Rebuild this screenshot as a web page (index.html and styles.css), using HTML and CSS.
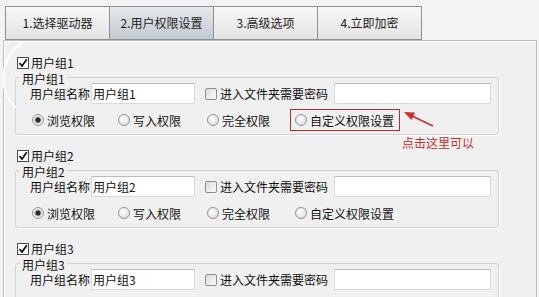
FILE: index.html
```html
<!DOCTYPE html>
<html lang="zh-CN">
<head>
  <meta charset="UTF-8">
  <title>用户权限设置</title>
  <link rel="stylesheet" href="styles.css">
</head>
<body>
  <div class="tabs">
    <div class="tab">1.选择驱动器</div>
    <div class="tab active">2.用户权限设置</div>
    <div class="tab">3.高级选项</div>
    <div class="tab last">4.立即加密</div>
  </div>

  <div class="panel">

    <div class="group">
      <label class="head"><span class="check on"><svg width="10" height="10" viewBox="0 0 10 10"><path d="M1.5 5 L4 8 L8.8 1.2" fill="none" stroke="#111" stroke-width="1.8"/></svg></span>用户组1</label>
      <fieldset class="box">
        <legend>用户组1</legend>
        <div class="row">
          <span class="name">用户组名称</span>
          <input class="field short" value="用户组1">
          <label class="opt"><span class="check"></span>进入文件夹需要密码</label>
          <input class="field long">
        </div>
        <div class="row radios">
          <label class="item w1"><span class="radio on"></span>浏览权限</label>
          <label class="item w2"><span class="radio"></span>写入权限</label>
          <label class="item w3"><span class="radio"></span>完全权限</label>
          <label class="item w4 marked"><span class="radio"></span>自定义权限设置</label>
        </div>
      </fieldset>
    </div>

    <div class="group">
      <label class="head"><span class="check on"><svg width="10" height="10" viewBox="0 0 10 10"><path d="M1.5 5 L4 8 L8.8 1.2" fill="none" stroke="#111" stroke-width="1.8"/></svg></span>用户组2</label>
      <fieldset class="box">
        <legend>用户组2</legend>
        <div class="row">
          <span class="name">用户组名称</span>
          <input class="field short" value="用户组2">
          <label class="opt"><span class="check"></span>进入文件夹需要密码</label>
          <input class="field long">
        </div>
        <div class="row radios">
          <label class="item w1"><span class="radio on"></span>浏览权限</label>
          <label class="item w2"><span class="radio"></span>写入权限</label>
          <label class="item w3"><span class="radio"></span>完全权限</label>
          <label class="item w4"><span class="radio"></span>自定义权限设置</label>
        </div>
      </fieldset>
    </div>

    <div class="group">
      <label class="head"><span class="check on"><svg width="10" height="10" viewBox="0 0 10 10"><path d="M1.5 5 L4 8 L8.8 1.2" fill="none" stroke="#111" stroke-width="1.8"/></svg></span>用户组3</label>
      <fieldset class="box">
        <legend>用户组3</legend>
        <div class="row">
          <span class="name">用户组名称</span>
          <input class="field short" value="用户组3">
          <label class="opt"><span class="check"></span>进入文件夹需要密码</label>
          <input class="field long">
        </div>
        <div class="row radios">
          <label class="item w1"><span class="radio on"></span>浏览权限</label>
          <label class="item w2"><span class="radio"></span>写入权限</label>
          <label class="item w3"><span class="radio"></span>完全权限</label>
          <label class="item w4"><span class="radio"></span>自定义权限设置</label>
        </div>
      </fieldset>
    </div>

    <!-- annotation -->
    <svg class="arrow" width="34" height="22" viewBox="0 0 34 22">
      <line x1="31" y1="18" x2="10" y2="8" stroke="#c8312f" stroke-width="1.6"/>
      <polygon points="2,4 13,4.5 9.5,12" fill="#d0302c"/>
    </svg>
    <div class="hint">点击这里可以</div>
  </div>

  <svg class="arc" width="60" height="90" viewBox="0 0 60 90">
    <path d="M22 5 A42 42 0 0 0 16 70" fill="none" stroke="#ffffff" stroke-opacity="0.85" stroke-width="2.2"/>
  </svg>
</body>
</html>
```

FILE: styles.css
```css
body {
  margin: 0;
  width: 539px;
  height: 297px;
  overflow: hidden;
  position: relative;
  background-color: #f3f3f3;
  font-family: "Noto Sans CJK SC", "Liberation Sans", sans-serif;
  font-size: 12px;
  color: #111;
}

/* Tabs */
.tabs {
  display: flex;
  padding: 6px 0 0 5px;
  height: 34px;
}

.tab {
  width: 103px;
  height: 32px;
  line-height: 32px;
  text-align: center;
  border: 1px solid #8d8f93;
  border-right: none;
  background: linear-gradient(#f7f7f7, #e4e4e4);
  color: #222;
}

.tab.last {
  border-right: 1px solid #8d8f93;
}

.tab.active {
  background: linear-gradient(#e6e9ed, #c3c9d1);
}

/* Panel */
.panel {
  position: relative;
  margin: 0 2px 0 3px;
  height: 300px;
  padding: 15px 0 0 11px;
  border: 1px solid #bdbdbd;
  background-color: #f0f0f0;
  box-shadow: inset 1px 1px 0 #fff;
}

.group + .group {
  margin-top: 14px;
}

.head {
  display: flex;
  align-items: center;
  gap: 2px;
  height: 14px;
  line-height: 14px;
  padding-left: 2px;
}

.check {
  display: inline-flex;
  align-items: center;
  justify-content: center;
  box-sizing: border-box;
  width: 12px;
  height: 12px;
  border: 1px solid #8e8f8f;
  border-radius: 2px;
  background: linear-gradient(135deg, #dcdcdc, #fafafa);
}

.check.on {
  border-color: #4a4a4a;
  border-radius: 0;
  background: #fff;
}

.box {
  box-sizing: border-box;
  width: 484px;
  margin: 0;
  padding: 0 0 3px 14px;
  border: 1px solid #d2d2d2;
  border-radius: 3px;
  box-shadow: 1px 1px 0 #fff;
}

.box legend {
  margin-left: -10px;
  padding: 3px 2px 0;
  line-height: 12px;
}

.row {
  display: flex;
  align-items: center;
}

.row:first-of-type {
  margin-top: -2px;
  height: 21px;
}

.name {
  width: 61px;
}

.field {
  box-sizing: border-box;
  height: 21px;
  margin: 0;
  padding: 0 1px;
  border: 1px solid #d9d9d9;
  border-top-color: #b9bcc2;
  background: #fff;
  font: inherit;
  color: #111;
  outline: none;
}

.short {
  width: 104px;
}

.long {
  width: 157px;
}

.opt {
  display: flex;
  align-items: center;
  gap: 3px;
  margin-left: 10px;
  margin-right: 6px;
}

.radios {
  margin-top: 5px;
  margin-left: -3px;
}

.item {
  box-sizing: border-box;
  display: flex;
  align-items: center;
  gap: 3px;
  height: 22px;
  padding-left: 4px;
  border: 1px solid transparent;
}

.w1 { width: 86px; }
.w2 { width: 89px; }
.w3 { width: 88px; }
.w4 { width: 110px; }

.item.marked {
  border-color: #b5302f;
}

.radio {
  box-sizing: border-box;
  width: 12px;
  height: 12px;
  border: 1px solid #949494;
  border-radius: 50%;
  background: radial-gradient(circle at 40% 35%, #ffffff, #d6d6d6);
}

.radio.on {
  background: radial-gradient(circle, #2c2c2c 0, #2c2c2c 2.2px, #c9c9c9 3px, #f7f7f7 5px);
}

/* Annotation */
.arrow {
  position: absolute;
  left: 398px;
  top: 67px;
}

.hint {
  position: absolute;
  left: 398px;
  top: 95px;
  line-height: 14px;
  color: #c0302e;
}

.arc {
  position: absolute;
  left: 0;
  top: 38px;
}
```
